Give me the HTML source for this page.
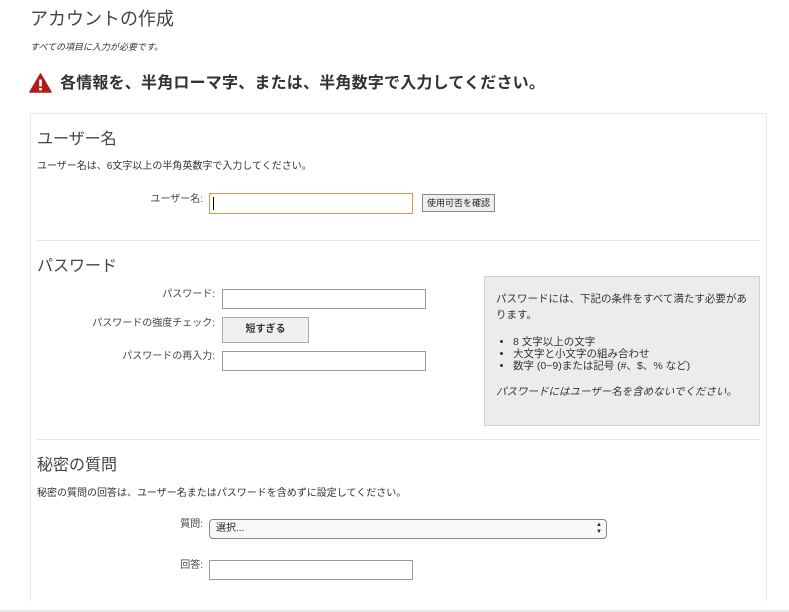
<!DOCTYPE html>
<html><head><meta charset="utf-8"><style>
*{margin:0;padding:0;box-sizing:border-box}
body{width:789px;height:612px;background:#fff;position:relative;overflow:hidden;font-family:"Liberation Sans","Noto Sans CJK JP",sans-serif;color:#333}
.a{position:absolute;white-space:nowrap;line-height:1.1}
.inp{position:absolute;border:1px solid #999;background:#fff;height:20px}
.lbl{position:absolute;font-size:10px;text-align:right;color:#444;line-height:1.1}
.sep{position:absolute;left:37px;width:723px;height:1px;background:#e6e6e6}
</style></head><body>
<div class="a" style="left:30px;top:10px;font-size:18px;color:#444">アカウントの作成</div>
<div class="a" style="left:30px;top:43px;font-size:9px;font-style:italic;color:#333">すべての項目に入力が必要です。</div>
<svg class="a" style="left:29px;top:73px" width="23" height="20" viewBox="0 0 23 20"><path d="M11.5 1 L22 19 L1 19 Z" fill="#b01c1c" stroke="#b01c1c" stroke-linejoin="round" stroke-width="1.5"/><rect x="10.2" y="6.5" width="2.6" height="7" fill="#fff"/><rect x="10.2" y="15" width="2.6" height="2.4" fill="#fff"/></svg>
<div class="a" style="left:60px;top:75px;font-size:16px;font-weight:bold;color:#333;letter-spacing:0.2px">各情報を、半角ローマ字、または、半角数字で入力してください。</div>
<div class="a" style="left:30px;top:113px;width:737px;height:488px;border:1px solid #e8e8e8;border-bottom:none"></div>
<div class="a" style="left:0;top:610px;width:789px;height:2px;background:#e8e8e8"></div>

<div class="a" style="left:37px;top:131px;font-size:16px;color:#444">ユーザー名</div>
<div class="a" style="left:37px;top:161px;font-size:10px">ユーザー名は、6文字以上の半角英数字で入力してください。</div>
<div class="lbl" style="left:100px;width:103px;top:194px">ユーザー名:</div>
<div class="inp" style="left:209px;top:193px;width:204px;height:21px;border-color:#e8914a"><div style="position:absolute;left:3px;top:3px;width:1px;height:13px;background:#000"></div></div>
<div class="a" style="left:422px;top:194px;width:73px;height:18px;border:1px solid #888;background:#eee;font-size:9px;text-align:center;line-height:16px;color:#222">使用可否を確認</div>
<div class="sep" style="top:240px"></div>

<div class="a" style="left:37px;top:258px;font-size:16px;color:#444">パスワード</div>
<div class="lbl" style="left:100px;width:115px;top:289px">パスワード:</div>
<div class="inp" style="left:222px;top:289px;width:204px"></div>
<div class="lbl" style="left:60px;width:155px;top:318px">パスワードの強度チェック:</div>
<div class="a" style="left:222px;top:317px;width:87px;height:26px;border:1px solid #aaa;background:#f0f0f0;font-size:10px;text-align:center;line-height:24px;color:#333;font-weight:bold">短すぎる</div>
<div class="lbl" style="left:100px;width:115px;top:351px">パスワードの再入力:</div>
<div class="inp" style="left:222px;top:351px;width:204px"></div>
<div class="a" style="left:484px;top:276px;width:276px;height:150px;background:#ececec;border:1px solid #d0d0d0;font-size:10.5px;color:#333;white-space:normal;padding:14px 10px 0 11px;line-height:16px">
パスワードには、下記の条件をすべて満たす必要があります。
<ul style="margin:13px 0 12px 17px;line-height:12px"><li>8 文字以上の文字</li><li>大文字と小文字の組み合わせ</li><li>数字 (0~9)または記号 (#、$、% など)</li></ul>
<i>パスワードにはユーザー名を含めないでください。</i></div>
<div class="sep" style="top:439px"></div>

<div class="a" style="left:37px;top:457px;font-size:16px;color:#444">秘密の質問</div>
<div class="a" style="left:37px;top:488px;font-size:10px">秘密の質問の回答は、ユーザー名またはパスワードを含めずに設定してください。</div>
<div class="lbl" style="left:100px;width:103px;top:519px">質問:</div>
<div class="a" style="left:209px;top:519px;width:398px;height:20px;border:1px solid #888;border-radius:4px;background:#f8f8f8;font-size:10px;line-height:18px;padding-left:6px;color:#222">選択...<span style="position:absolute;right:4px;font-size:6px;line-height:7px;top:2px">▲<br>▼</span></div>
<div class="lbl" style="left:100px;width:103px;top:560px">回答:</div>
<div class="inp" style="left:209px;top:560px;width:204px"></div>
</body></html>
